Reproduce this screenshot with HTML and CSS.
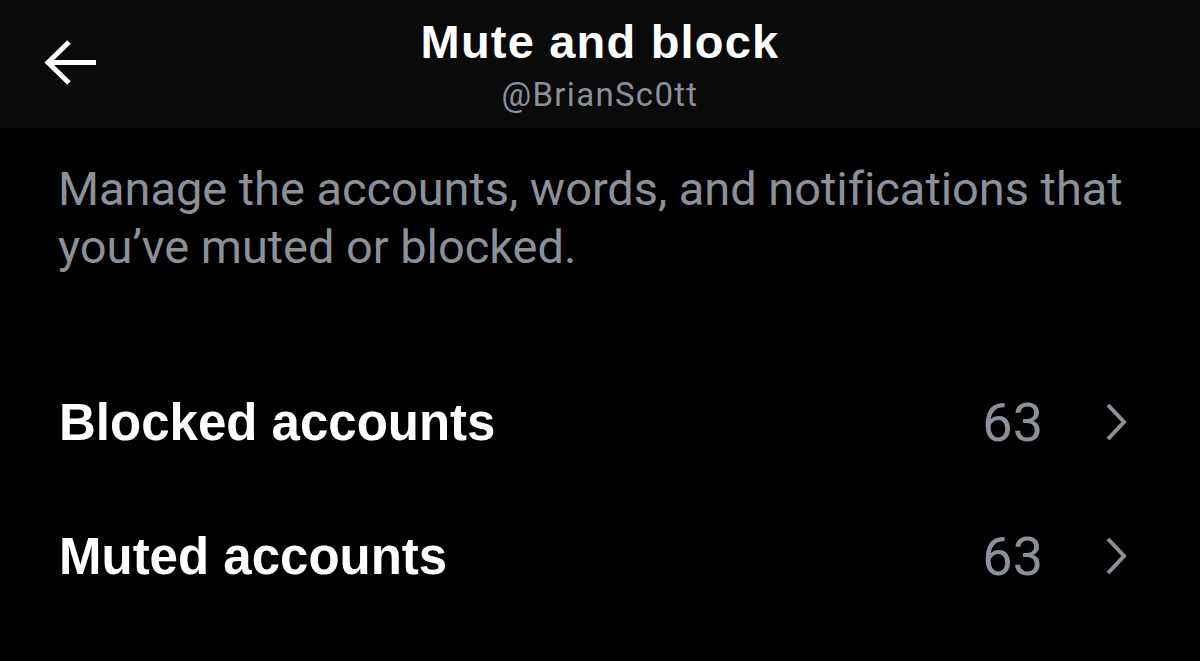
FILE: index.html
```html
<!DOCTYPE html>
<html>
<head>
<meta charset="utf-8">
<link rel="stylesheet" href="styles.css">
</head>
<body>
<header class="topbar">
  <button class="back" aria-label="Back">
    <svg width="54" height="46" viewBox="0 0 54 46"><path d="M53 22.5H5 M26 2L5 22.5L26 43" fill="none" stroke="#fff" stroke-width="5"/></svg>
  </button>
  <div class="titles">
    <h1 class="title">Mute and block</h1>
    <div class="handle">@BrianSc0tt</div>
  </div>
</header>
<main class="content">
  <p class="desc">Manage the accounts, words, and notifications that you’ve muted or blocked.</p>
  <ul class="list">
    <li class="row">
      <span class="label">Blocked accounts</span>
      <span class="count">63</span>
      <svg class="chev" width="22" height="38" viewBox="0 0 22 38"><path d="M3 2L19 19L3 36" fill="none" stroke="#8b9099" stroke-width="4"/></svg>
    </li>
    <li class="row">
      <span class="label">Muted accounts</span>
      <span class="count">63</span>
      <svg class="chev" width="22" height="38" viewBox="0 0 22 38"><path d="M3 2L19 19L3 36" fill="none" stroke="#8b9099" stroke-width="4"/></svg>
    </li>
  </ul>
</main>
</body>
</html>
```
FILE: styles.css
```css
html, body {
  margin: 0;
  padding: 0;
  background: #000;
  height: 100%;
  overflow: hidden;
}
body {
  font-family: "Liberation Sans", Arial, sans-serif;
  color: #fff;
}
.topbar {
  height: 128px;
  background: #0a0a0a;
  display: flex;
  justify-content: center;
  position: relative;
}
.back {
  position: absolute;
  left: 43px;
  top: 40px;
  background: none;
  border: 0;
  padding: 0;
  display: block;
}
.back svg { display: block; }
.titles {
  text-align: center;
  padding-top: 16px;
}
.title {
  margin: 0;
  font-size: 47px;
  font-weight: 700;
  line-height: 52px;
  letter-spacing: 1.2px;
}
.handle {
  margin-top: 5px;
  font-family: Roboto, sans-serif;
  font-size: 33px;
  line-height: 44px;
  letter-spacing: 1.3px;
  color: #8b9099;
}
.content {
  padding: 0 50px 0 58px;
}
.desc {
  margin: 0;
  padding-top: 32px;
  font-family: Roboto, sans-serif;
  font-size: 47px;
  line-height: 58px;
  letter-spacing: -0.05px;
  color: #8b9099;
}
.list {
  list-style: none;
  margin: 0;
  padding: 0;
  margin-top: 79px;
}
.row {
  display: flex;
  align-items: center;
  height: 134px;
}
.label {
  flex: 1;
  font-size: 51px;
  font-weight: 700;
  padding-left: 1px;
}
.count {
  font-family: Roboto, sans-serif;
  font-size: 54px;
  color: #8b9099;
  margin-right: 62px;
}
.chev {
  display: block;
  margin-right: 23px;
}
```
